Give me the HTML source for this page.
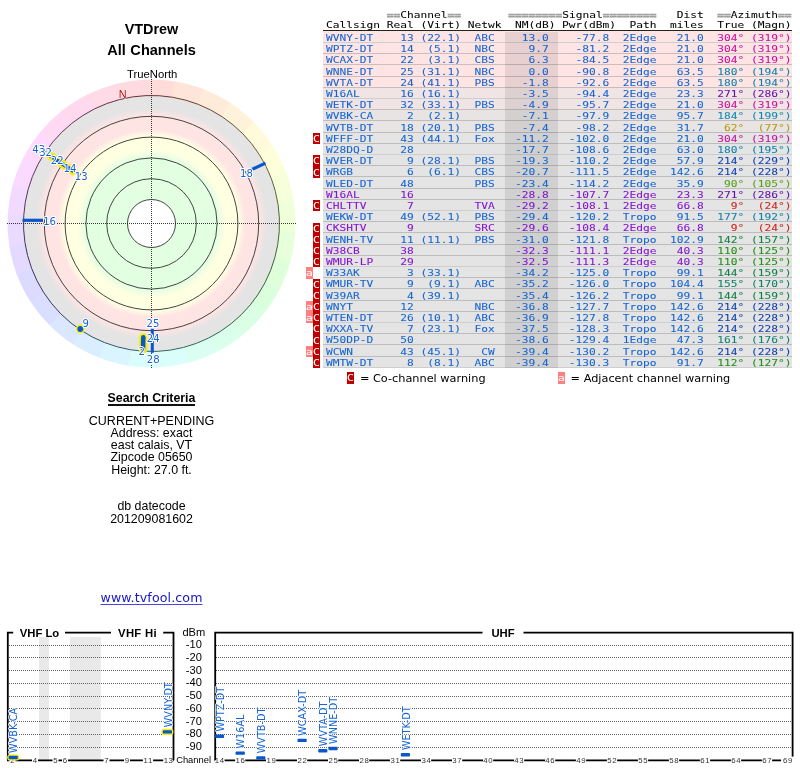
<!DOCTYPE html>
<html><head><meta charset="utf-8"><title>VTDrew - All Channels</title>
<style>
html,body{margin:0;padding:0;background:#fff;}
body{width:800px;height:768px;position:relative;overflow:hidden;font-family:"Liberation Sans",sans-serif;color:#000;}
.abs{position:absolute;}
.ctr{position:absolute;left:0;width:303px;text-align:center;white-space:nowrap;}
.t1{font-weight:bold;font-size:14.4px;line-height:16px;}
.sc{font-size:12.4px;line-height:12.6px;}
#tbl{position:absolute;left:0;top:0;will-change:transform;font-family:"DejaVu Sans Mono","Liberation Mono",monospace;font-size:9.6px;letter-spacing:0px;white-space:pre;}
#tbl div{position:absolute;left:325.5px;height:11.2px;line-height:11.2px;white-space:pre;-webkit-text-stroke:0.06px currentColor;transform:scale(1.168,0.98);transform-origin:0 50%;}
#tbl .bg{left:323px;width:469px;transform:none;}
.b{color:#1464d2}.p{color:#8212d2}.g{color:#a0a0a0;font-weight:bold;-webkit-text-stroke:0.55px #a0a0a0}
.wc,.wa{position:absolute;width:7px;height:11.2px;background:#c00000;}
#tbl .wt{color:#fff;}
.wa{background:#ff8080;}
.lg{position:absolute;font-family:"DejaVu Sans","Liberation Sans",sans-serif;font-size:11.3px;line-height:12px;white-space:nowrap;}
svg{position:absolute;left:0;top:0;}
svg text{font-family:"Liberation Sans",sans-serif;}
svg .dj{font-family:"DejaVu Sans","Liberation Sans",sans-serif;}
#page{position:absolute;left:0;top:0;width:800px;height:768px;will-change:transform;}
</style></head><body><div id="page">

<svg width="800" height="768" viewBox="0 0 800 768">
<defs><radialGradient id="rg" gradientUnits="userSpaceOnUse" cx="151.5" cy="223.5" r="128">
<stop offset="0.0000" stop-color="#ffffff"/>
<stop offset="0.1875" stop-color="#ffffff"/>
<stop offset="0.1875" stop-color="#e2ffe2"/>
<stop offset="0.5156" stop-color="#e2ffe2"/>
<stop offset="0.5781" stop-color="#ffffe2"/>
<stop offset="0.6797" stop-color="#ffffe2"/>
<stop offset="0.7344" stop-color="#ffe4e4"/>
<stop offset="0.8438" stop-color="#ffe4e4"/>
<stop offset="0.8984" stop-color="#e4e4e4"/>
<stop offset="1.0000" stop-color="#e4e4e4"/>
</radialGradient></defs>
<path d="M151.50 223.50L144.47 79.67A144 144 0 0 1 176.01 81.60Z" fill="#ffdcda"/>
<path d="M151.50 223.50L174.52 81.35A144 144 0 0 1 204.98 89.80Z" fill="#ffe4da"/>
<path d="M151.50 223.50L203.57 89.25A144 144 0 0 1 231.61 103.84Z" fill="#ffebda"/>
<path d="M151.50 223.50L230.35 103.01A144 144 0 0 1 254.74 123.11Z" fill="#fff2da"/>
<path d="M151.50 223.50L253.68 122.03A144 144 0 0 1 273.35 146.77Z" fill="#fffada"/>
<path d="M151.50 223.50L272.54 145.49A144 144 0 0 1 286.64 173.78Z" fill="#fdffda"/>
<path d="M151.50 223.50L286.11 172.36A144 144 0 0 1 294.03 202.96Z" fill="#f5ffda"/>
<path d="M151.50 223.50L293.80 201.47A144 144 0 0 1 295.18 233.04Z" fill="#eeffda"/>
<path d="M151.50 223.50L295.28 231.54A144 144 0 0 1 290.06 262.71Z" fill="#e7ffda"/>
<path d="M151.50 223.50L290.46 261.26A144 144 0 0 1 278.88 290.66Z" fill="#dfffda"/>
<path d="M151.50 223.50L279.58 289.32A144 144 0 0 1 262.13 315.68Z" fill="#daffdc"/>
<path d="M151.50 223.50L263.09 314.51A144 144 0 0 1 240.55 336.66Z" fill="#daffe4"/>
<path d="M151.50 223.50L241.73 335.72A144 144 0 0 1 215.08 352.71Z" fill="#daffeb"/>
<path d="M151.50 223.50L216.43 352.03A144 144 0 0 1 186.82 363.10Z" fill="#dafff2"/>
<path d="M151.50 223.50L188.28 362.72A144 144 0 0 1 157.03 367.39Z" fill="#dafffa"/>
<path d="M151.50 223.50L158.53 367.33A144 144 0 0 1 126.99 365.40Z" fill="#dafdff"/>
<path d="M151.50 223.50L128.48 365.65A144 144 0 0 1 98.02 357.20Z" fill="#daf5ff"/>
<path d="M151.50 223.50L99.43 357.75A144 144 0 0 1 71.39 343.16Z" fill="#daeeff"/>
<path d="M151.50 223.50L72.65 343.99A144 144 0 0 1 48.26 323.89Z" fill="#dae7ff"/>
<path d="M151.50 223.50L49.32 324.97A144 144 0 0 1 29.65 300.23Z" fill="#dadfff"/>
<path d="M151.50 223.50L30.46 301.51A144 144 0 0 1 16.36 273.22Z" fill="#dcdaff"/>
<path d="M151.50 223.50L16.89 274.64A144 144 0 0 1 8.97 244.04Z" fill="#e4daff"/>
<path d="M151.50 223.50L9.20 245.53A144 144 0 0 1 7.82 213.96Z" fill="#ebdaff"/>
<path d="M151.50 223.50L7.72 215.46A144 144 0 0 1 12.94 184.29Z" fill="#f2daff"/>
<path d="M151.50 223.50L12.54 185.74A144 144 0 0 1 24.12 156.34Z" fill="#fadaff"/>
<path d="M151.50 223.50L23.42 157.68A144 144 0 0 1 40.87 131.32Z" fill="#ffdafd"/>
<path d="M151.50 223.50L39.91 132.49A144 144 0 0 1 62.45 110.34Z" fill="#ffdaf5"/>
<path d="M151.50 223.50L61.27 111.28A144 144 0 0 1 87.92 94.29Z" fill="#ffdaee"/>
<path d="M151.50 223.50L86.57 94.97A144 144 0 0 1 116.18 83.90Z" fill="#ffdae7"/>
<path d="M151.50 223.50L114.72 84.28A144 144 0 0 1 145.97 79.61Z" fill="#ffdadf"/>
<circle cx="151.5" cy="223.5" r="128" fill="url(#rg)"/>
<path d="M145.92 95.62A128 128 0 0 1 172.63 97.26" fill="none" stroke="#663633" stroke-width="1"/>
<path d="M172.63 97.26A128 128 0 0 1 198.41 104.41" fill="none" stroke="#664033" stroke-width="1"/>
<path d="M198.41 104.41A128 128 0 0 1 222.15 116.76" fill="none" stroke="#664a33" stroke-width="1"/>
<path d="M222.15 116.76A128 128 0 0 1 242.80 133.78" fill="none" stroke="#665533" stroke-width="1"/>
<path d="M242.80 133.78A128 128 0 0 1 259.45 154.73" fill="none" stroke="#665f33" stroke-width="1"/>
<path d="M259.45 154.73A128 128 0 0 1 271.39 178.67" fill="none" stroke="#636633" stroke-width="1"/>
<path d="M271.39 178.67A128 128 0 0 1 278.09 204.58" fill="none" stroke="#596633" stroke-width="1"/>
<path d="M278.09 204.58A128 128 0 0 1 279.26 231.31" fill="none" stroke="#4f6633" stroke-width="1"/>
<path d="M279.26 231.31A128 128 0 0 1 274.84 257.71" fill="none" stroke="#446633" stroke-width="1"/>
<path d="M274.84 257.71A128 128 0 0 1 265.04 282.60" fill="none" stroke="#3a6633" stroke-width="1"/>
<path d="M265.04 282.60A128 128 0 0 1 250.27 304.92" fill="none" stroke="#336636" stroke-width="1"/>
<path d="M250.27 304.92A128 128 0 0 1 231.18 323.67" fill="none" stroke="#336640" stroke-width="1"/>
<path d="M231.18 323.67A128 128 0 0 1 208.61 338.05" fill="none" stroke="#33664a" stroke-width="1"/>
<path d="M208.61 338.05A128 128 0 0 1 183.55 347.42" fill="none" stroke="#336655" stroke-width="1"/>
<path d="M183.55 347.42A128 128 0 0 1 157.08 351.38" fill="none" stroke="#33665f" stroke-width="1"/>
<path d="M157.08 351.38A128 128 0 0 1 130.37 349.74" fill="none" stroke="#336366" stroke-width="1"/>
<path d="M130.37 349.74A128 128 0 0 1 104.59 342.59" fill="none" stroke="#335966" stroke-width="1"/>
<path d="M104.59 342.59A128 128 0 0 1 80.85 330.24" fill="none" stroke="#334f66" stroke-width="1"/>
<path d="M80.85 330.24A128 128 0 0 1 60.20 313.22" fill="none" stroke="#334466" stroke-width="1"/>
<path d="M60.20 313.22A128 128 0 0 1 43.55 292.27" fill="none" stroke="#333a66" stroke-width="1"/>
<path d="M43.55 292.27A128 128 0 0 1 31.61 268.33" fill="none" stroke="#363366" stroke-width="1"/>
<path d="M31.61 268.33A128 128 0 0 1 24.91 242.42" fill="none" stroke="#403366" stroke-width="1"/>
<path d="M24.91 242.42A128 128 0 0 1 23.74 215.69" fill="none" stroke="#4a3366" stroke-width="1"/>
<path d="M23.74 215.69A128 128 0 0 1 28.16 189.29" fill="none" stroke="#553366" stroke-width="1"/>
<path d="M28.16 189.29A128 128 0 0 1 37.96 164.40" fill="none" stroke="#5f3366" stroke-width="1"/>
<path d="M37.96 164.40A128 128 0 0 1 52.73 142.08" fill="none" stroke="#663363" stroke-width="1"/>
<path d="M52.73 142.08A128 128 0 0 1 71.82 123.33" fill="none" stroke="#663359" stroke-width="1"/>
<path d="M71.82 123.33A128 128 0 0 1 94.39 108.95" fill="none" stroke="#66334f" stroke-width="1"/>
<path d="M94.39 108.95A128 128 0 0 1 119.45 99.58" fill="none" stroke="#663344" stroke-width="1"/>
<path d="M119.45 99.58A128 128 0 0 1 145.92 95.62" fill="none" stroke="#66333a" stroke-width="1"/>
<circle cx="151.5" cy="223.5" r="24" fill="none" stroke="#303030" stroke-width="0.9"/>
<circle cx="151.5" cy="223.5" r="44.8" fill="none" stroke="#303030" stroke-width="0.9"/>
<circle cx="151.5" cy="223.5" r="65.6" fill="none" stroke="#303030" stroke-width="0.9"/>
<circle cx="151.5" cy="223.5" r="86.4" fill="none" stroke="#303030" stroke-width="0.9"/>
<circle cx="151.5" cy="223.5" r="107.2" fill="none" stroke="#303030" stroke-width="0.9"/>
<path d="M151.5 79.0V368.0 M7.0 223.5H296.0" stroke="#1a1a1a" stroke-opacity="0.85" stroke-width="1" stroke-dasharray="1 1" fill="none"/>
<line x1="73.14" y1="171.04" x2="50.78" y2="156.08" stroke="#f8f000" stroke-width="8.2" stroke-linecap="round"/>
<line x1="73.14" y1="171.04" x2="50.78" y2="156.08" stroke="#0a56cc" stroke-width="3.8" stroke-linecap="round"/>
<line x1="22.50" y1="220.30" x2="43.00" y2="220.30" stroke="#0a56cc" stroke-width="3.2" stroke-linecap="butt"/>
<line x1="251.90" y1="169.40" x2="265.50" y2="163.10" stroke="#0a56cc" stroke-width="3.2" stroke-linecap="butt"/>
<line x1="152.30" y1="328.80" x2="152.30" y2="352.80" stroke="#0a56cc" stroke-width="3.0" stroke-linecap="butt"/>
<line x1="143.30" y1="337.20" x2="143.00" y2="349.30" stroke="#f8f000" stroke-width="8.6" stroke-linecap="round"/>
<line x1="143.30" y1="337.20" x2="143.00" y2="349.30" stroke="#0a56cc" stroke-width="4.6" stroke-linecap="round"/>
<circle cx="80.3" cy="329" r="4.4" fill="#f8f000"/><circle cx="80.3" cy="329" r="2.9" fill="#0a56cc"/>
<text class="dj" x="38.80" y="152.60" font-size="10.1" text-anchor="middle" fill="#1464d2" stroke="#fff" stroke-width="2.0" stroke-linejoin="round" paint-order="stroke" style="paint-order:stroke">43</text>
<text class="dj" x="45.60" y="156.30" font-size="10.1" text-anchor="middle" fill="#1464d2" stroke="#fff" stroke-width="2.0" stroke-linejoin="round" paint-order="stroke" style="paint-order:stroke">32</text>
<text class="dj" x="57.30" y="164.30" font-size="10.1" text-anchor="middle" fill="#1464d2" stroke="#fff" stroke-width="2.0" stroke-linejoin="round" paint-order="stroke" style="paint-order:stroke">22</text>
<text class="dj" x="69.90" y="172.10" font-size="10.1" text-anchor="middle" fill="#1464d2" stroke="#fff" stroke-width="2.0" stroke-linejoin="round" paint-order="stroke" style="paint-order:stroke">14</text>
<text class="dj" x="81.30" y="180.00" font-size="10.1" text-anchor="middle" fill="#1464d2" stroke="#fff" stroke-width="2.0" stroke-linejoin="round" paint-order="stroke" style="paint-order:stroke">13</text>
<text class="dj" x="49.60" y="224.80" font-size="10.1" text-anchor="middle" fill="#1464d2" stroke="#fff" stroke-width="2.0" stroke-linejoin="round" paint-order="stroke" style="paint-order:stroke">16</text>
<text class="dj" x="246.50" y="177.40" font-size="10.1" text-anchor="middle" fill="#1464d2" stroke="#fff" stroke-width="2.0" stroke-linejoin="round" paint-order="stroke" style="paint-order:stroke">18</text>
<text class="dj" x="85.60" y="326.50" font-size="10.1" text-anchor="middle" fill="#1464d2" stroke="#fff" stroke-width="2.0" stroke-linejoin="round" paint-order="stroke" style="paint-order:stroke">9</text>
<text class="dj" x="153.00" y="326.50" font-size="10.1" text-anchor="middle" fill="#1464d2" stroke="#fff" stroke-width="2.0" stroke-linejoin="round" paint-order="stroke" style="paint-order:stroke">25</text>
<text class="dj" x="153.30" y="341.50" font-size="10.1" text-anchor="middle" fill="#1464d2" stroke="#fff" stroke-width="2.0" stroke-linejoin="round" paint-order="stroke" style="paint-order:stroke">24</text>
<text class="dj" x="141.80" y="355.00" font-size="10.1" text-anchor="middle" fill="#1464d2" stroke="#fff" stroke-width="2.0" stroke-linejoin="round" paint-order="stroke" style="paint-order:stroke">2</text>
<text class="dj" x="153.20" y="362.50" font-size="10.1" text-anchor="middle" fill="#1464d2" stroke="#fff" stroke-width="2.0" stroke-linejoin="round" paint-order="stroke" style="paint-order:stroke">28</text>
<text class="" x="122.70" y="97.60" font-size="10.8" text-anchor="middle" fill="#c00000" stroke="#fff" stroke-width="0.9" stroke-linejoin="round" paint-order="stroke" style="paint-order:stroke">N</text>
<text x="152.2" y="77.7" font-size="11.3" text-anchor="middle">TrueNorth</text>
<rect x="39" y="637" width="10" height="123.2" fill="#e9e9e9"/>
<rect x="69.8" y="637" width="31" height="123.2" fill="#e9e9e9"/>
<path d="M9 645.5H172 M216 645.5H792" stroke="#606060" stroke-width="1" stroke-dasharray="1 1" fill="none"/>
<path d="M9 657.5H172 M216 657.5H792" stroke="#606060" stroke-width="1" stroke-dasharray="1 1" fill="none"/>
<path d="M9 670.5H172 M216 670.5H792" stroke="#606060" stroke-width="1" stroke-dasharray="1 1" fill="none"/>
<path d="M9 683.5H172 M216 683.5H792" stroke="#606060" stroke-width="1" stroke-dasharray="1 1" fill="none"/>
<path d="M9 696.5H172 M216 696.5H792" stroke="#606060" stroke-width="1" stroke-dasharray="1 1" fill="none"/>
<path d="M9 708.5H172 M216 708.5H792" stroke="#606060" stroke-width="1" stroke-dasharray="1 1" fill="none"/>
<path d="M9 721.5H172 M216 721.5H792" stroke="#606060" stroke-width="1" stroke-dasharray="1 1" fill="none"/>
<path d="M9 734.5H172 M216 734.5H792" stroke="#606060" stroke-width="1" stroke-dasharray="1 1" fill="none"/>
<path d="M9 747.5H172 M216 747.5H792" stroke="#606060" stroke-width="1" stroke-dasharray="1 1" fill="none"/>
<path d="M7 760.3H174 M214 760.3H793.5" stroke="#000" stroke-width="1.7" fill="none"/>
<text x="39.5" y="637.3" font-size="11.3" font-weight="bold" text-anchor="middle">VHF Lo</text>
<text x="137.5" y="637.3" font-size="11.3" font-weight="bold" text-anchor="middle" letter-spacing="0.3">VHF Hi</text>
<text x="503" y="637.3" font-size="11.3" font-weight="bold" text-anchor="middle">UHF</text>
<text x="193.8" y="636.2" font-size="11.1" text-anchor="middle">dBm</text>
<text x="193.8" y="648.0" font-size="11.1" text-anchor="middle">-10</text>
<text x="193.8" y="660.7" font-size="11.1" text-anchor="middle">-20</text>
<text x="193.8" y="673.5" font-size="11.1" text-anchor="middle">-30</text>
<text x="193.8" y="686.2" font-size="11.1" text-anchor="middle">-40</text>
<text x="193.8" y="699.0" font-size="11.1" text-anchor="middle">-50</text>
<text x="193.8" y="711.8" font-size="11.1" text-anchor="middle">-60</text>
<text x="193.8" y="724.5" font-size="11.1" text-anchor="middle">-70</text>
<text x="193.8" y="737.3" font-size="11.1" text-anchor="middle">-80</text>
<text x="193.8" y="750.0" font-size="11.1" text-anchor="middle">-90</text>
<text x="193.6" y="763" font-size="9.4" text-anchor="middle">Channel</text>
<rect x="9.5" y="757.7" width="6.0" height="5" fill="#fff"/>
<text x="12.8" y="763.0" font-size="7.8" text-anchor="middle" fill="#333" letter-spacing="0.6">2</text>
<rect x="32.0" y="757.7" width="6.0" height="5" fill="#fff"/>
<text x="35.2" y="763.0" font-size="7.8" text-anchor="middle" fill="#333" letter-spacing="0.6">4</text>
<rect x="52.5" y="757.7" width="6.0" height="5" fill="#fff"/>
<text x="55.8" y="763.0" font-size="7.8" text-anchor="middle" fill="#333" letter-spacing="0.6">5</text>
<rect x="62.0" y="757.7" width="6.0" height="5" fill="#fff"/>
<text x="65.2" y="763.0" font-size="7.8" text-anchor="middle" fill="#333" letter-spacing="0.6">6</text>
<rect x="103.5" y="757.7" width="6.0" height="5" fill="#fff"/>
<text x="106.8" y="763.0" font-size="7.8" text-anchor="middle" fill="#333" letter-spacing="0.6">7</text>
<rect x="124.0" y="757.7" width="6.0" height="5" fill="#fff"/>
<text x="127.2" y="763.0" font-size="7.8" text-anchor="middle" fill="#333" letter-spacing="0.6">9</text>
<rect x="142.9" y="757.7" width="10.2" height="5" fill="#fff"/>
<text x="148.2" y="763.0" font-size="7.8" text-anchor="middle" fill="#333" letter-spacing="0.6">11</text>
<rect x="163.2" y="757.7" width="10.2" height="5" fill="#fff"/>
<text x="168.6" y="763.0" font-size="7.8" text-anchor="middle" fill="#333" letter-spacing="0.6">13</text>
<rect x="214.4" y="757.7" width="10.2" height="5" fill="#fff"/>
<text x="219.8" y="763.0" font-size="7.8" text-anchor="middle" fill="#333" letter-spacing="0.6">14</text>
<rect x="235.1" y="757.7" width="10.2" height="5" fill="#fff"/>
<text x="240.4" y="763.0" font-size="7.8" text-anchor="middle" fill="#333" letter-spacing="0.6">16</text>
<rect x="266.0" y="757.7" width="10.2" height="5" fill="#fff"/>
<text x="271.4" y="763.0" font-size="7.8" text-anchor="middle" fill="#333" letter-spacing="0.6">19</text>
<rect x="297.0" y="757.7" width="10.2" height="5" fill="#fff"/>
<text x="302.4" y="763.0" font-size="7.8" text-anchor="middle" fill="#333" letter-spacing="0.6">22</text>
<rect x="328.0" y="757.7" width="10.2" height="5" fill="#fff"/>
<text x="333.4" y="763.0" font-size="7.8" text-anchor="middle" fill="#333" letter-spacing="0.6">25</text>
<rect x="359.0" y="757.7" width="10.2" height="5" fill="#fff"/>
<text x="364.4" y="763.0" font-size="7.8" text-anchor="middle" fill="#333" letter-spacing="0.6">28</text>
<rect x="390.0" y="757.7" width="10.2" height="5" fill="#fff"/>
<text x="395.4" y="763.0" font-size="7.8" text-anchor="middle" fill="#333" letter-spacing="0.6">31</text>
<rect x="421.0" y="757.7" width="10.2" height="5" fill="#fff"/>
<text x="426.4" y="763.0" font-size="7.8" text-anchor="middle" fill="#333" letter-spacing="0.6">34</text>
<rect x="452.0" y="757.7" width="10.2" height="5" fill="#fff"/>
<text x="457.3" y="763.0" font-size="7.8" text-anchor="middle" fill="#333" letter-spacing="0.6">37</text>
<rect x="483.0" y="757.7" width="10.2" height="5" fill="#fff"/>
<text x="488.3" y="763.0" font-size="7.8" text-anchor="middle" fill="#333" letter-spacing="0.6">40</text>
<rect x="514.0" y="757.7" width="10.2" height="5" fill="#fff"/>
<text x="519.3" y="763.0" font-size="7.8" text-anchor="middle" fill="#333" letter-spacing="0.6">43</text>
<rect x="545.0" y="757.7" width="10.2" height="5" fill="#fff"/>
<text x="550.3" y="763.0" font-size="7.8" text-anchor="middle" fill="#333" letter-spacing="0.6">46</text>
<rect x="575.9" y="757.7" width="10.2" height="5" fill="#fff"/>
<text x="581.3" y="763.0" font-size="7.8" text-anchor="middle" fill="#333" letter-spacing="0.6">49</text>
<rect x="606.9" y="757.7" width="10.2" height="5" fill="#fff"/>
<text x="612.3" y="763.0" font-size="7.8" text-anchor="middle" fill="#333" letter-spacing="0.6">52</text>
<rect x="637.9" y="757.7" width="10.2" height="5" fill="#fff"/>
<text x="643.3" y="763.0" font-size="7.8" text-anchor="middle" fill="#333" letter-spacing="0.6">55</text>
<rect x="668.9" y="757.7" width="10.2" height="5" fill="#fff"/>
<text x="674.3" y="763.0" font-size="7.8" text-anchor="middle" fill="#333" letter-spacing="0.6">58</text>
<rect x="699.9" y="757.7" width="10.2" height="5" fill="#fff"/>
<text x="705.3" y="763.0" font-size="7.8" text-anchor="middle" fill="#333" letter-spacing="0.6">61</text>
<rect x="730.9" y="757.7" width="10.2" height="5" fill="#fff"/>
<text x="736.2" y="763.0" font-size="7.8" text-anchor="middle" fill="#333" letter-spacing="0.6">64</text>
<rect x="761.9" y="757.7" width="10.2" height="5" fill="#fff"/>
<text x="767.2" y="763.0" font-size="7.8" text-anchor="middle" fill="#333" letter-spacing="0.6">67</text>
<path d="M13.2 632.7H7.8V760.2" stroke="#000" stroke-width="1.8" fill="none"/>
<path d="M65 632.7H111" stroke="#000" stroke-width="1.8" fill="none"/>
<path d="M163.2 632.7H173.5V760.2" stroke="#000" stroke-width="1.8" fill="none"/>
<path d="M482.5 632.7H215.2V760.2" stroke="#000" stroke-width="1.8" fill="none"/>
<path d="M523.5 632.7H792.6V760.2" stroke="#000" stroke-width="1.8" fill="none"/>
<rect x="781" y="756.6" width="13.5" height="6" fill="#fff"/>
<rect x="782.5" y="757.7" width="10.2" height="5" fill="#fff"/>
<text x="787.9" y="763.0" font-size="7.8" text-anchor="middle" fill="#333" letter-spacing="0.6">69</text>
<rect x="7.2" y="754.4" width="12" height="6.2" rx="2.8" fill="#f8f000"/>
<rect x="8.6" y="755.8" width="9.2" height="3.4" rx="0.9" fill="#0a56cc"/>
<text class="dj" transform="translate(17.3 752.9) rotate(-90)" font-size="9.7" fill="#1464d2" stroke="#fff" stroke-width="1.4" stroke-linejoin="round" style="paint-order:stroke">WVBK-CA</text>
<rect x="161.4" y="728.8" width="12" height="6.2" rx="2.8" fill="#f8f000"/>
<rect x="162.8" y="730.2" width="9.2" height="3.4" rx="0.9" fill="#0a56cc"/>
<text class="dj" transform="translate(171.5 727.3) rotate(-90)" font-size="9.7" fill="#1464d2" stroke="#fff" stroke-width="1.4" stroke-linejoin="round" style="paint-order:stroke">WVNY-DT</text>
<rect x="214.9" y="734.5" width="9.2" height="3.4" rx="0.9" fill="#0a56cc"/>
<text class="dj" transform="translate(223.6 731.6) rotate(-90)" font-size="9.7" fill="#1464d2" stroke="#fff" stroke-width="1.4" stroke-linejoin="round" style="paint-order:stroke">WPTZ-DT</text>
<rect x="235.6" y="751.4" width="9.2" height="3.4" rx="0.9" fill="#0a56cc"/>
<text class="dj" transform="translate(244.3 748.5) rotate(-90)" font-size="9.7" fill="#1464d2" stroke="#fff" stroke-width="1.4" stroke-linejoin="round" style="paint-order:stroke">W16AL</text>
<rect x="256.2" y="756.2" width="9.2" height="3.4" rx="0.9" fill="#0a56cc"/>
<text class="dj" transform="translate(264.9 753.3) rotate(-90)" font-size="9.7" fill="#1464d2" stroke="#fff" stroke-width="1.4" stroke-linejoin="round" style="paint-order:stroke">WVTB-DT</text>
<rect x="297.5" y="738.7" width="9.2" height="3.4" rx="0.9" fill="#0a56cc"/>
<text class="dj" transform="translate(306.2 735.8) rotate(-90)" font-size="9.7" fill="#1464d2" stroke="#fff" stroke-width="1.4" stroke-linejoin="round" style="paint-order:stroke">WCAX-DT</text>
<rect x="318.2" y="749.1" width="9.2" height="3.4" rx="0.9" fill="#0a56cc"/>
<text class="dj" transform="translate(326.9 746.2) rotate(-90)" font-size="9.7" fill="#1464d2" stroke="#fff" stroke-width="1.4" stroke-linejoin="round" style="paint-order:stroke">WVTA-DT</text>
<rect x="328.5" y="746.8" width="9.2" height="3.4" rx="0.9" fill="#0a56cc"/>
<text class="dj" transform="translate(337.2 743.9) rotate(-90)" font-size="9.7" fill="#1464d2" stroke="#fff" stroke-width="1.4" stroke-linejoin="round" style="paint-order:stroke">WNNE-DT</text>
<rect x="400.8" y="753.0" width="9.2" height="3.4" rx="0.9" fill="#0a56cc"/>
<text class="dj" transform="translate(409.5 750.1) rotate(-90)" font-size="9.7" fill="#1464d2" stroke="#fff" stroke-width="1.4" stroke-linejoin="round" style="paint-order:stroke">WETK-DT</text>
</svg>
<div class="ctr t1" style="top:20.5px">VTDrew</div>
<div class="ctr t1" style="top:42.4px;font-size:14.55px;word-spacing:0.6px">All Channels</div>
<div class="ctr" style="top:391px;font-weight:bold;font-size:12.35px;line-height:14px"><span style="border-bottom:2px solid #111;display:inline-block;line-height:12.1px">Search Criteria</span></div>
<div class="ctr sc" style="top:414.8px;font-size:12.5px">CURRENT+PENDING</div>
<div class="ctr sc" style="top:426.8px">Address: exact</div>
<div class="ctr sc" style="top:439px">east calais, VT</div>
<div class="ctr sc" style="top:451.3px">Zipcode 05650</div>
<div class="ctr sc" style="top:464.2px">Height: 27.0 ft.</div>
<div class="ctr sc" style="top:500px">db datecode</div>
<div class="ctr sc" style="top:512.5px">201209081602</div>
<div class="ctr" style="top:590.6px;font-family:'DejaVu Sans','Liberation Sans',sans-serif;font-size:12.6px;letter-spacing:0.12px;line-height:14px;color:#1616c4"><span style="text-decoration:underline;text-decoration-color:#4848e0;text-underline-offset:2.4px;text-decoration-thickness:1px">www.tvfool.com</span></div>
<div id="tbl">
<div style="top:8.70px"><span class="g">         ==</span>Channel<span class="g">==       ========</span>Signal<span class="g">========</span>   Dist  <span class="g">==</span>Azimuth<span class="g">==</span></div>
<div style="top:19.40px">Callsign Real (Virt) Netwk  NM(dB) Pwr(dBm)  Path  miles  True (Magn)</div>
<div class="bg" style="top:29.9px;height:1.2px;background:#222"></div>
<div class="bg" style="top:31.30px;height:11.20px;background:#ffe4e4"></div>
<div class="bg" style="top:42.50px;height:11.20px;background:#ffe4e4"></div>
<div class="bg" style="top:53.70px;height:11.20px;background:#ffe4e4"></div>
<div class="bg" style="top:64.90px;height:11.20px;background:#ffe4e4"></div>
<div class="bg" style="top:76.10px;height:11.20px;background:#ffe4e4"></div>
<div class="bg" style="top:87.30px;height:11.20px;background:#f1e4e4"></div>
<div class="bg" style="top:98.50px;height:11.20px;background:#f1e4e4"></div>
<div class="bg" style="top:109.70px;height:11.20px;background:#e9e4e4"></div>
<div class="bg" style="top:120.90px;height:11.20px;background:#e9e4e4"></div>
<div class="bg" style="top:132.10px;height:11.20px;background:#e4e4e4"></div>
<div class="bg" style="top:143.30px;height:11.20px;background:#e4e4e4"></div>
<div class="bg" style="top:154.50px;height:11.20px;background:#e4e4e4"></div>
<div class="bg" style="top:165.70px;height:11.20px;background:#e4e4e4"></div>
<div class="bg" style="top:176.90px;height:11.20px;background:#e4e4e4"></div>
<div class="bg" style="top:188.10px;height:11.20px;background:#e4e4e4"></div>
<div class="bg" style="top:199.30px;height:11.20px;background:#e4e4e4"></div>
<div class="bg" style="top:210.50px;height:11.20px;background:#e4e4e4"></div>
<div class="bg" style="top:221.70px;height:11.20px;background:#e4e4e4"></div>
<div class="bg" style="top:232.90px;height:11.20px;background:#e4e4e4"></div>
<div class="bg" style="top:244.10px;height:11.20px;background:#e4e4e4"></div>
<div class="bg" style="top:255.30px;height:11.20px;background:#e4e4e4"></div>
<div class="bg" style="top:266.50px;height:11.20px;background:#e4e4e4"></div>
<div class="bg" style="top:277.70px;height:11.20px;background:#e4e4e4"></div>
<div class="bg" style="top:288.90px;height:11.20px;background:#e4e4e4"></div>
<div class="bg" style="top:300.10px;height:11.20px;background:#e4e4e4"></div>
<div class="bg" style="top:311.30px;height:11.20px;background:#e4e4e4"></div>
<div class="bg" style="top:322.50px;height:11.20px;background:#e4e4e4"></div>
<div class="bg" style="top:333.70px;height:11.20px;background:#e4e4e4"></div>
<div class="bg" style="top:344.90px;height:11.20px;background:#e4e4e4"></div>
<div class="bg" style="top:356.10px;height:11.20px;background:#e4e4e4"></div>
<div class="bg" style="top:41.90px;height:1px;background:rgba(110,110,110,0.34)"></div>
<div class="bg" style="top:53.10px;height:1px;background:rgba(110,110,110,0.34)"></div>
<div class="bg" style="top:64.30px;height:1px;background:rgba(110,110,110,0.34)"></div>
<div class="bg" style="top:75.50px;height:1px;background:rgba(110,110,110,0.34)"></div>
<div class="bg" style="top:86.70px;height:1px;background:rgba(110,110,110,0.34)"></div>
<div class="bg" style="top:97.90px;height:1px;background:rgba(110,110,110,0.34)"></div>
<div class="bg" style="top:109.10px;height:1px;background:rgba(110,110,110,0.34)"></div>
<div class="bg" style="top:120.30px;height:1px;background:rgba(110,110,110,0.34)"></div>
<div class="bg" style="top:131.50px;height:1px;background:rgba(110,110,110,0.34)"></div>
<div class="bg" style="top:142.70px;height:1px;background:rgba(110,110,110,0.34)"></div>
<div class="bg" style="top:153.90px;height:1px;background:rgba(110,110,110,0.34)"></div>
<div class="bg" style="top:165.10px;height:1px;background:rgba(110,110,110,0.34)"></div>
<div class="bg" style="top:176.30px;height:1px;background:rgba(110,110,110,0.34)"></div>
<div class="bg" style="top:187.50px;height:1px;background:rgba(110,110,110,0.34)"></div>
<div class="bg" style="top:198.70px;height:1px;background:rgba(110,110,110,0.34)"></div>
<div class="bg" style="top:209.90px;height:1px;background:rgba(110,110,110,0.34)"></div>
<div class="bg" style="top:221.10px;height:1px;background:rgba(110,110,110,0.34)"></div>
<div class="bg" style="top:232.30px;height:1px;background:rgba(110,110,110,0.34)"></div>
<div class="bg" style="top:243.50px;height:1px;background:rgba(110,110,110,0.34)"></div>
<div class="bg" style="top:254.70px;height:1px;background:rgba(110,110,110,0.34)"></div>
<div class="bg" style="top:265.90px;height:1px;background:rgba(110,110,110,0.34)"></div>
<div class="bg" style="top:277.10px;height:1px;background:rgba(110,110,110,0.34)"></div>
<div class="bg" style="top:288.30px;height:1px;background:rgba(110,110,110,0.34)"></div>
<div class="bg" style="top:299.50px;height:1px;background:rgba(110,110,110,0.34)"></div>
<div class="bg" style="top:310.70px;height:1px;background:rgba(110,110,110,0.34)"></div>
<div class="bg" style="top:321.90px;height:1px;background:rgba(110,110,110,0.34)"></div>
<div class="bg" style="top:333.10px;height:1px;background:rgba(110,110,110,0.34)"></div>
<div class="bg" style="top:344.30px;height:1px;background:rgba(110,110,110,0.34)"></div>
<div class="bg" style="top:355.50px;height:1px;background:rgba(110,110,110,0.34)"></div>
<div class="bg" style="top:366.70px;height:1px;background:rgba(110,110,110,0.34)"></div>
<div class="bg" style="left:504.5px;width:53.5px;top:31.90px;height:335.80px;background:rgba(0,0,0,0.085)"></div>
<div class="b" style="top:32.05px">WVNY-DT    13 (22.1)  ABC    13.0    -77.8  2Edge   21.0  <span style="color:#c810a0">304° (319°)</span></div>
<div class="b" style="top:43.25px">WPTZ-DT    14  (5.1)  NBC     9.7    -81.2  2Edge   21.0  <span style="color:#c810a0">304° (319°)</span></div>
<div class="b" style="top:54.45px">WCAX-DT    22  (3.1)  CBS     6.3    -84.5  2Edge   21.0  <span style="color:#c810a0">304° (319°)</span></div>
<div class="b" style="top:65.65px">WNNE-DT    25 (31.1)  NBC     0.0    -90.8  2Edge   63.5  <span style="color:#1082ac">180° (194°)</span></div>
<div class="b" style="top:76.85px">WVTA-DT    24 (41.1)  PBS    -1.8    -92.6  2Edge   63.5  <span style="color:#1082ac">180° (194°)</span></div>
<div class="b" style="top:88.05px">W16AL      16 (16.1)         -3.5    -94.4  2Edge   23.3  <span style="color:#6810b0">271° (286°)</span></div>
<div class="b" style="top:99.25px">WETK-DT    32 (33.1)  PBS    -4.9    -95.7  2Edge   21.0  <span style="color:#c810a0">304° (319°)</span></div>
<div class="b" style="top:110.45px">WVBK-CA     2  (2.1)         -7.1    -97.9  2Edge   95.7  <span style="color:#1088b0">184° (199°)</span></div>
<div class="b" style="top:121.65px">WVTB-DT    18 (20.1)  PBS    -7.4    -98.2  2Edge   31.7  <span style="color:#b89810"> 62°  (77°)</span></div>
<div class="b" style="top:132.85px">WFFF-DT    43 (44.1)  Fox   -11.2   -102.0  2Edge   21.0  <span style="color:#c810a0">304° (319°)</span></div>
<span class="wc" style="left:313.00px;top:133.00px;width:7.00px;height:11.2px"></span>
<div class="wt" style="left:313.15px;top:132.90px">C</div>
<div class="b" style="top:144.05px">W28DQ-D    28               -17.7   -108.6  2Edge   63.0  <span style="color:#1082ac">180° (195°)</span></div>
<div class="b" style="top:155.25px">WVER-DT     9 (28.1)  PBS   -19.3   -110.2  2Edge   57.9  <span style="color:#1040b0">214° (229°)</span></div>
<span class="wc" style="left:313.00px;top:155.40px;width:7.00px;height:11.2px"></span>
<div class="wt" style="left:313.15px;top:155.30px">C</div>
<div class="b" style="top:166.45px">WRGB        6  (6.1)  CBS   -20.7   -111.5  2Edge  142.6  <span style="color:#1040b0">214° (228°)</span></div>
<span class="wc" style="left:313.00px;top:166.60px;width:7.00px;height:11.2px"></span>
<div class="wt" style="left:313.15px;top:166.50px">C</div>
<div class="b" style="top:177.65px">WLED-DT    48         PBS   -23.4   -114.2  2Edge   35.9  <span style="color:#58a018"> 90° (105°)</span></div>
<div class="p" style="top:188.85px">W16AL      16               -28.8   -107.7  2Edge   23.3  <span style="color:#6810b0">271° (286°)</span></div>
<div class="p" style="top:200.05px">CHLTTV      7         TVA   -29.2   -108.1  2Edge   66.8  <span style="color:#d02018">  9°  (24°)</span></div>
<span class="wc" style="left:313.00px;top:200.20px;width:7.00px;height:11.2px"></span>
<div class="wt" style="left:313.15px;top:200.10px">C</div>
<div class="b" style="top:211.25px">WEKW-DT    49 (52.1)  PBS   -29.4   -120.2  Tropo   91.5  <span style="color:#1080a8">177° (192°)</span></div>
<div class="p" style="top:222.45px">CKSHTV      9         SRC   -29.6   -108.4  2Edge   66.8  <span style="color:#d02018">  9°  (24°)</span></div>
<span class="wc" style="left:313.00px;top:222.60px;width:7.00px;height:11.2px"></span>
<div class="wt" style="left:313.15px;top:222.50px">C</div>
<div class="b" style="top:233.65px">WENH-TV    11 (11.1)  PBS   -31.0   -121.8  Tropo  102.9  <span style="color:#108040">142° (157°)</span></div>
<span class="wc" style="left:313.00px;top:233.80px;width:7.00px;height:11.2px"></span>
<div class="wt" style="left:313.15px;top:233.70px">C</div>
<div class="p" style="top:244.85px">W38CB      38               -32.3   -111.1  2Edge   40.3  <span style="color:#209010">110° (125°)</span></div>
<span class="wc" style="left:313.00px;top:245.00px;width:7.00px;height:11.2px"></span>
<div class="wt" style="left:313.15px;top:244.90px">C</div>
<div class="p" style="top:256.05px">WMUR-LP    29               -32.5   -111.3  2Edge   40.3  <span style="color:#209010">110° (125°)</span></div>
<span class="wc" style="left:313.00px;top:256.20px;width:7.00px;height:11.2px"></span>
<div class="wt" style="left:313.15px;top:256.10px">C</div>
<div class="b" style="top:267.25px">W33AK       3 (33.1)        -34.2   -125.0  Tropo   99.1  <span style="color:#108046">144° (159°)</span></div>
<span class="wa" style="left:306.20px;top:267.40px;width:6.80px;height:11.2px"></span>
<div class="wt" style="left:306.35px;top:267.30px">a</div>
<div class="b" style="top:278.45px">WMUR-TV     9  (9.1)  ABC   -35.2   -126.0  Tropo  104.4  <span style="color:#108064">155° (170°)</span></div>
<span class="wc" style="left:313.00px;top:278.60px;width:7.00px;height:11.2px"></span>
<div class="wt" style="left:313.15px;top:278.50px">C</div>
<div class="b" style="top:289.65px">W39AR       4 (39.1)        -35.4   -126.2  Tropo   99.1  <span style="color:#108046">144° (159°)</span></div>
<span class="wc" style="left:313.00px;top:289.80px;width:7.00px;height:11.2px"></span>
<div class="wt" style="left:313.15px;top:289.70px">C</div>
<div class="b" style="top:300.85px">WNYT       12         NBC   -36.8   -127.7  Tropo  142.6  <span style="color:#1040b0">214° (228°)</span></div>
<span class="wc" style="left:313.00px;top:301.00px;width:7.00px;height:11.2px"></span>
<div class="wt" style="left:313.15px;top:300.90px">C</div>
<span class="wa" style="left:306.20px;top:301.00px;width:6.80px;height:11.2px"></span>
<div class="wt" style="left:306.35px;top:300.90px">a</div>
<div class="b" style="top:312.05px">WTEN-DT    26 (10.1)  ABC   -36.9   -127.8  Tropo  142.6  <span style="color:#1040b0">214° (228°)</span></div>
<span class="wc" style="left:313.00px;top:312.20px;width:7.00px;height:11.2px"></span>
<div class="wt" style="left:313.15px;top:312.10px">C</div>
<span class="wa" style="left:306.20px;top:312.20px;width:6.80px;height:11.2px"></span>
<div class="wt" style="left:306.35px;top:312.10px">a</div>
<div class="b" style="top:323.25px">WXXA-TV     7 (23.1)  Fox   -37.5   -128.3  Tropo  142.6  <span style="color:#1040b0">214° (228°)</span></div>
<span class="wc" style="left:313.00px;top:323.40px;width:7.00px;height:11.2px"></span>
<div class="wt" style="left:313.15px;top:323.30px">C</div>
<div class="b" style="top:334.45px">W50DP-D    50               -38.6   -129.4  1Edge   47.3  <span style="color:#108074">161° (176°)</span></div>
<span class="wc" style="left:313.00px;top:334.60px;width:7.00px;height:11.2px"></span>
<div class="wt" style="left:313.15px;top:334.50px">C</div>
<div class="b" style="top:345.65px">WCWN       43 (45.1)   CW   -39.4   -130.2  Tropo  142.6  <span style="color:#1040b0">214° (228°)</span></div>
<span class="wc" style="left:313.00px;top:345.80px;width:7.00px;height:11.2px"></span>
<div class="wt" style="left:313.15px;top:345.70px">C</div>
<span class="wa" style="left:306.20px;top:345.80px;width:6.80px;height:11.2px"></span>
<div class="wt" style="left:306.35px;top:345.70px">a</div>
<div class="b" style="top:356.85px">WMTW-DT     8  (8.1)  ABC   -39.4   -130.3  Tropo   91.7  <span style="color:#1c9014">112° (127°)</span></div>
<span class="wc" style="left:313.00px;top:357.00px;width:7.00px;height:11.2px"></span>
<div class="wt" style="left:313.15px;top:356.90px">C</div>
<span class="wc" style="left:346.80px;top:372.00px;width:7.00px;height:11.6px"></span>
<div class="wt" style="left:346.95px;top:371.90px">C</div>
<span class="wa" style="left:557.90px;top:372.00px;width:6.80px;height:11.6px"></span>
<div class="wt" style="left:558.05px;top:371.90px">a</div>
</div>
<div class="lg" style="left:359.9px;top:372.7px">= Co-channel warning</div>
<div class="lg" style="left:570.6px;top:372.7px">= Adjacent channel warning</div>
</div></body></html>
